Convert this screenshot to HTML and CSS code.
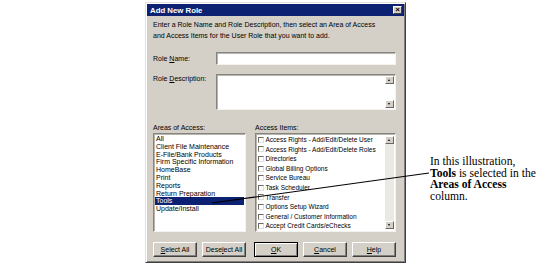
FILE: index.html
```html
<!DOCTYPE html>
<html lang="en">
<head>
    <meta charset="UTF-8">
    <title>Add New Role</title>
    <link rel="stylesheet" href="styles.css">
</head>
<body>
    <div class="page">
        <!-- Dialog -->
        <div class="dialog">
            <div class="titlebar">
                <span class="title">Add New Role</span>
                <span class="close">&times;</span>
            </div>
            <div class="dialog-body">
                <p class="intro">Enter a Role Name and Role Description, then select an Area of Access<br>and Access Items for the User Role that you want to add.</p>

                <div class="field">
                    <label class="field-label">Role <u>N</u>ame:</label>
                    <div class="edit"></div>
                </div>

                <div class="field field-desc">
                    <label class="field-label">Role <u>D</u>escription:</label>
                    <div class="edit memo">
                        <div class="vscroll">
                            <span class="arrow up"></span>
                            <span class="track blank"></span>
                            <span class="arrow down"></span>
                        </div>
                    </div>
                </div>

                <div class="lists">
                    <div class="col col-areas">
                        <div class="col-label">Areas of Access:</div>
                        <ul class="listbox">
                            <li>All</li>
                            <li>Client File Maintenance</li>
                            <li>E-File/Bank Products</li>
                            <li>Firm Specific Information</li>
                            <li>HomeBase</li>
                            <li>Print</li>
                            <li>Reports</li>
                            <li>Return Preparation</li>
                            <li class="selected">Tools</li>
                            <li>Update/Install</li>
                        </ul>
                    </div>
                    <div class="col col-items">
                        <div class="col-label">Access Items:</div>
                        <div class="listbox checklist">
                            <ul>
                                <li><span class="check"></span>Access Rights - Add/Edit/Delete User</li>
                                <li><span class="check"></span>Access Rights - Add/Edit/Delete Roles</li>
                                <li><span class="check"></span>Directories</li>
                                <li><span class="check"></span>Global Billing Options</li>
                                <li><span class="check"></span>Service Bureau</li>
                                <li><span class="check"></span>Task Scheduler</li>
                                <li><span class="check"></span>Transfer</li>
                                <li><span class="check"></span>Options Setup Wizard</li>
                                <li><span class="check"></span>General / Customer Information</li>
                                <li><span class="check"></span>Accept Credit Cards/eChecks</li>
                            </ul>
                            <div class="vscroll">
                                <span class="arrow up"></span>
                                <span class="track"></span>
                                <span class="arrow down"></span>
                            </div>
                        </div>
                    </div>
                </div>

                <div class="buttons">
                    <div class="btn-group">
                        <button class="btn"><u>S</u>elect All</button>
                        <button class="btn">Dese<u>l</u>ect All</button>
                    </div>
                    <div class="btn-group">
                        <button class="btn btn-default"><u>O</u>K</button>
                        <button class="btn"><u>C</u>ancel</button>
                        <button class="btn"><u>H</u>elp</button>
                    </div>
                </div>
            </div>
        </div>

        <!-- Callout note -->
        <div class="callout">
            In this illustration,<br>
            <b>Tools</b> is selected in the<br>
            <b>Areas of Access</b><br>
            column.
        </div>

        <!-- Leader line from the note to the selected item -->
        <svg class="leader" width="553" height="267" viewBox="0 0 553 267">
            <line x1="212" y1="203" x2="429" y2="173" stroke="#000" stroke-width="1.1"/>
        </svg>
    </div>
</body>
</html>
```

FILE: styles.css
```css
body {
    margin: 0;
    padding: 0;
    background-color: #fff;
    font-family: "Liberation Sans", Arial, sans-serif;
    font-size: 7px;
    color: #000;
}

.page {
    position: relative;
    display: flex;
    align-items: flex-start;
    padding: 2px 0 0 145px;
    width: 553px;
    height: 267px;
    box-sizing: border-box;
}

/* Dialog frame */
.dialog {
    width: 261px;
    box-sizing: border-box;
    background-color: #d4d0c8;
    border: 1px solid;
    border-color: #e4e1db #404040 #404040 #e4e1db;
    box-shadow: inset 1px 1px #fff, inset -1px -1px #808080;
    padding: 1px;
}

.titlebar {
    height: 12px;
    background-color: #0c2171;
    display: flex;
    align-items: center;
    justify-content: space-between;
    padding: 0 2px 0 3px;
}

.title {
    color: #fff;
    font-weight: bold;
    font-size: 7.8px;
}

.close {
    width: 9px;
    height: 8px;
    background-color: #d4d0c8;
    border: 1px solid;
    border-color: #fff #404040 #404040 #fff;
    box-sizing: border-box;
    font-size: 8px;
    font-weight: bold;
    line-height: 5px;
    text-align: center;
}

.dialog-body {
    padding: 4px 8px 4px 6px;
}

.intro {
    margin: 0;
    line-height: 10.5px;
}

/* Form fields */
.field {
    display: flex;
    align-items: center;
    margin-top: 11px;
}

.field-desc {
    align-items: flex-start;
    margin-top: 9px;
}

.field-label {
    width: 63px;
    flex-shrink: 0;
    line-height: 8px;
}

.field-desc .field-label {
    padding-top: 1px;
}

.edit {
    flex: 1;
    height: 13px;
    box-sizing: border-box;
    background-color: #fff;
    border: 1px solid;
    border-color: #868480 #f4f3f0 #f4f3f0 #868480;
    box-shadow: inset 1px 1px #b8b5ae;
}

.memo {
    height: 36px;
    display: flex;
    justify-content: flex-end;
}

/* Scrollbars */
.vscroll {
    width: 9px;
    display: flex;
    flex-direction: column;
    padding: 1px 1px 1px 0;
}

.arrow {
    height: 8px;
    box-sizing: border-box;
    background-color: #d4d0c8;
    border: 1px solid;
    border-color: #fff #6a6864 #6a6864 #fff;
    position: relative;
}

.arrow::after {
    content: "";
    position: absolute;
    left: 2px;
    border-left: 1.5px solid transparent;
    border-right: 1.5px solid transparent;
}

.arrow.up::after {
    top: 2px;
    border-bottom: 2px solid #000;
}

.arrow.down::after {
    top: 2px;
    border-top: 2px solid #000;
}

.track {
    flex: 1;
    background-color: #ebe9e4;
}

.track.blank {
    background-color: #fff;
}

/* List columns */
.lists {
    display: flex;
    gap: 9px;
    margin-top: 14px;
}

.col-label {
    line-height: 8px;
    margin-bottom: 1px;
}

.col-areas {
    width: 93px;
}

.col-items {
    flex: 1;
}

.listbox {
    list-style: none;
    margin: 0;
    height: 99px;
    box-sizing: border-box;
    padding: 1px;
    background-color: #fff;
    border: 1px solid;
    border-color: #868480 #f4f3f0 #f4f3f0 #868480;
    box-shadow: inset 1px 1px #b8b5ae;
}

.listbox li {
    line-height: 7.8px;
    padding-left: 1px;
    white-space: nowrap;
}

.listbox li.selected {
    background-color: #0c2171;
    color: #fff;
}

.checklist {
    display: flex;
    padding: 1px 0 1px 1px;
    font-size: 6.5px;
}

.checklist ul {
    list-style: none;
    margin: 0;
    padding: 0;
    flex: 1;
    overflow: hidden;
}

.checklist li {
    display: flex;
    align-items: center;
    height: 9.6px;
    line-height: 9.6px;
}

.check {
    width: 6px;
    height: 6px;
    box-sizing: border-box;
    margin-right: 1.5px;
    background-color: #fff;
    border: 1px solid;
    border-color: #6d6b66 #e0ded8 #e0ded8 #6d6b66;
    flex-shrink: 0;
}

/* Buttons */
.buttons {
    display: flex;
    gap: 8px;
    margin-top: 10px;
}

.btn-group {
    display: flex;
    gap: 5px;
}

.btn {
    width: 44px;
    height: 15px;
    padding: 0;
    font-family: inherit;
    font-size: 7px;
    color: #000;
    background-color: #d4d0c8;
    border: 1px solid;
    border-color: #fff #404040 #404040 #fff;
    box-shadow: inset -1px -1px #808080;
}

.btn-default {
    border: 1px solid #000;
    box-shadow: inset 1px 1px #fff, inset -1px -1px #808080;
}

/* Callout */
.callout {
    margin: 154px 0 0 24px;
    font-family: "Liberation Serif", "Times New Roman", serif;
    font-size: 11.6px;
    line-height: 11.7px;
}

.leader {
    position: absolute;
    top: 0;
    left: 0;
    pointer-events: none;
}
```
